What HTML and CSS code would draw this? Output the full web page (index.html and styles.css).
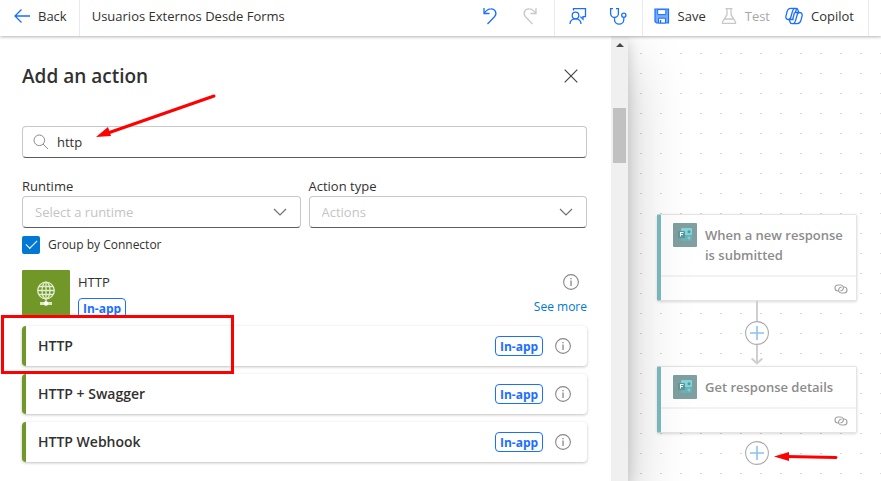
FILE: index.html
```html
<!DOCTYPE html>
<html lang="en">
<head>
<meta charset="utf-8">
<title>Usuarios Externos Desde Forms</title>
<link rel="stylesheet" href="styles.css">
</head>
<body>
<svg class="symbols" aria-hidden="true">
  <symbol id="info" viewBox="0 0 16 16">
    <circle cx="8" cy="8" r="7.4" fill="none" stroke="#8a8886" stroke-width="1.1"/>
    <path d="M7.4 4h1.300v1.300H7.400zM7.400 6.500h1.300V12H7.400z" fill="#8a8886"/>
  </symbol>
  <symbol id="chevron" viewBox="0 0 14 8">
    <path d="M1 1l6 6 6-6" fill="none" stroke="#707070" stroke-width="1.2"/>
  </symbol>
  <symbol id="plus" viewBox="0 0 24 24">
    <circle cx="12" cy="12" r="11.4" fill="#fff" stroke="#acacac" stroke-width="1.1"/>
    <path d="M12 5v14M5 12h14" stroke="#8fc1ea" stroke-width="1.6"/>
  </symbol>
  <symbol id="link" viewBox="0 0 14 10">
    <g fill="none" stroke="#a0a0a0" stroke-width="1.100">
      <path d="M5 7H4A3 3 0 0 1 4 1h2.500a2.900 2.900 0 0 1 2.300 4.700c-.6.800-1.500 1.200-2.500 1"/>
      <path d="M9 3h1a3 3 0 0 1 0 6H7.500a2.900 2.900 0 0 1-2.300-4.700c.6-.8 1.500-1.200 2.500-1"/>
    </g>
  </symbol>
  <symbol id="forms" viewBox="0 0 24 24">
    <rect width="24" height="24" rx="1" fill="#7f9fa0"/>
    <rect x="8" y="5" width="11" height="7" rx="1" fill="#86d3d8"/>
    <rect x="8" y="12" width="11" height="6" rx="1" fill="#69b3b7"/>
    <circle cx="16" cy="8.700" r="1.500" fill="#4e9ca2"/>
    <circle cx="16" cy="15" r="1.500" fill="#8fc9cb"/>
    <rect x="5" y="8" width="7" height="7" rx="1" fill="#5a9699"/>
    <path d="M7.500 13.500v-4h3M7.500 11.500h2.500" fill="none" stroke="#fff" stroke-width="1.100"/>
  </symbol>
</svg>

<header class="bar">
  <button class="tool back">
    <svg width="16" height="14" viewBox="0 0 16 14"><path d="M16 7H1M7.500.5L1 7l6.500 6.500" fill="none" stroke="#1a6fff" stroke-width="1.300"/></svg>
    Back
  </button>
  <h1 class="flow-name">Usuarios Externos Desde Forms</h1>
  <div class="group history">
    <button class="tool" aria-label="Undo"><svg width="16" height="18" viewBox="0 0 16 18"><path d="M2 1v5.500h5.500M2.200 6.200C4 3.500 6 1.800 9 1.800a4.700 4.700 0 0 1 3.500 8L5.500 17" fill="none" stroke="#1a6fff" stroke-width="1.300"/></svg></button>
    <button class="tool" aria-label="Redo" disabled><svg width="16" height="18" viewBox="0 0 16 18"><path d="M14 1v5.500H8.500M13.800 6.200C12 3.500 10 1.800 7 1.800a4.700 4.700 0 0 0-3.500 8L10.500 17" fill="none" stroke="#c8c8c8" stroke-width="1.300"/></svg></button>
  </div>
  <div class="group checks">
    <button class="tool" aria-label="Feedback"><svg width="18" height="18" viewBox="0 0 18 18"><g fill="none" stroke="#1a6fff" stroke-width="1.300"><circle cx="6.500" cy="8.500" r="3.300"/><path d="M1 17c0-3 2.200-5.200 5.500-5.200S12 14 12 17M4.500 3.500V1.600h12v8h-2.500v2.600l-2.700-2.600"/></g></svg></button>
    <button class="tool" aria-label="Flow checker"><svg width="18" height="18" viewBox="0 0 18 18"><g fill="none" stroke="#1a6fff" stroke-width="1.300"><path d="M4 1.600H1.600v5a3.900 3.900 0 0 0 7.800 0v-5H7M5.500 10.500v2a4.600 4.600 0 0 0 9.300 0v-2.300"/><circle cx="14.800" cy="8.200" r="2.100"/></g></svg></button>
  </div>
  <div class="group commands">
    <button class="tool"><svg width="16" height="16" viewBox="0 0 16 16"><path d="M1 1h13.500v14H2.500L1 13.500z" fill="#76adff" stroke="#1a6fff" stroke-width="1.200"/><path d="M3.700 1.600h8.100v5H3.700zM4.500 10.200h7V15h-7z" fill="#fff" stroke="#1a6fff"/><path d="M6.500 12v3" stroke="#1a6fff" stroke-width="1.400"/></svg>Save</button>
    <button class="tool" disabled><svg width="16" height="16" viewBox="0 0 16 16"><path d="M4.500.7h7M6 .7v6L1.500 14v1.300h13V14L10 6.700v-6M3.500 11h9" fill="none" stroke="#c8c8c8" stroke-width="1.300"/></svg>Test</button>
    <button class="tool"><svg width="18" height="18" viewBox="0 0 18 18"><g fill="none" stroke="#1a6fff" stroke-width="1.300" stroke-linejoin="round"><path d="M8.500 12.500H3.200C.9 12.500.6 10.500 1 8.800l1-4C2.600 2.500 3.800 1.400 5.800 1.400h5.400c1.200 0 1.600.9 1.900 1.900l.4 1.700"/><path d="M9.500 5.500h5.300c2.300 0 2.600 2 2.200 3.700l-1 4c-.6 2.300-1.800 3.400-3.800 3.400H6.800c-1.200 0-1.600-.9-1.900-1.900l-.6-2"/><path d="M9.500 1.500C8.200 2 7.700 3.300 7.300 4.800L5.900 10c-.3 1.400-.8 2.200-1.900 2.500M8.500 16.500c1.300-.5 1.800-1.800 2.200-3.300L12.100 8c.3-1.400.8-2.200 1.900-2.500M9.500 5.500L7.700 12.500M11.500 1.500l-1 4"/></g></svg>Copilot</button>
  </div>
</header>

<main class="work">
  <section class="panel">
    <div class="content">
      <div class="heading">
        <h2>Add an action</h2>
        <button class="icon-btn" aria-label="Close"><svg width="14" height="14" viewBox="0 0 14 14"><path d="M.7.7l12.600 12.600M13.300.7L.7 13.300" stroke="#484644" stroke-width="1.200"/></svg></button>
      </div>
      <label class="search">
        <svg width="16" height="16" viewBox="0 0 16 16"><g fill="none" stroke="#8a8a8a"><circle cx="6.300" cy="6.300" r="5.300"/><path d="M10 10l5 5"/></g></svg>
        <input type="text" value="http" aria-label="Search for an action or connector">
      </label>
      <div class="filters">
        <div class="field">
          <label for="runtime">Runtime</label>
          <div class="pick">
            <select id="runtime"><option>Select a runtime</option></select>
            <svg width="14" height="8"><use href="#chevron"/></svg>
          </div>
        </div>
        <div class="field">
          <label for="type">Action type</label>
          <div class="pick">
            <select id="type"><option>Actions</option></select>
            <svg width="14" height="8"><use href="#chevron"/></svg>
          </div>
        </div>
      </div>
      <label class="check"><input type="checkbox" checked>Group by Connector</label>

      <div class="connector">
        <svg width="48" height="48" viewBox="0 0 48 48"><rect width="48" height="48" rx="1" fill="#709727"/><g fill="none" stroke="#e3edcf" stroke-width="1.300"><circle cx="24" cy="20.500" r="8.300"/><ellipse cx="24" cy="20.500" rx="4" ry="8.300"/><path d="M24 12v21M15.700 20.500h16.600M17 16.500h14M17 24.500h14"/></g><path d="M18 33.500h12" stroke="#dce8c4" stroke-width="3"/><circle cx="24" cy="33.500" r="2.300" fill="#fff"/></svg>
        <div class="about"><h3>HTTP</h3><span class="badge">In-app</span></div>
        <div class="more">
          <button class="icon-btn" aria-label="About HTTP"><svg width="16" height="16"><use href="#info"/></svg></button>
          <a href="#more">See more</a>
        </div>
      </div>
      <ul class="actions">
        <li class="marked"><span>HTTP</span><span class="badge">In-app</span><button class="icon-btn" aria-label="About HTTP action"><svg width="16" height="16"><use href="#info"/></svg></button></li>
        <li><span>HTTP + Swagger</span><span class="badge">In-app</span><button class="icon-btn" aria-label="About HTTP + Swagger"><svg width="16" height="16"><use href="#info"/></svg></button></li>
        <li><span>HTTP Webhook</span><span class="badge">In-app</span><button class="icon-btn" aria-label="About HTTP Webhook"><svg width="16" height="16"><use href="#info"/></svg></button></li>
      </ul>
      <svg class="pointer to-search" width="120" height="46" viewBox="0 0 120 46"><path d="M118 3L12 40" stroke="#f00" stroke-width="3" stroke-linecap="round"/><path d="M0 44l12-10 3 9z" fill="#f00"/></svg>
    </div>
    <div class="scroll" aria-hidden="true"><span class="up"></span><span class="thumb"></span></div>
  </section>

  <section class="canvas">
    <article class="node">
      <div class="top"><svg width="24" height="24"><use href="#forms"/></svg><h3>When a new response is submitted</h3></div>
      <div class="foot"><svg width="14" height="10"><use href="#link"/></svg></div>
    </article>
    <div class="edge">
      <span class="line"></span>
      <button class="icon-btn" aria-label="Insert step"><svg width="24" height="24"><use href="#plus"/></svg></button>
      <svg width="12" height="21" viewBox="0 0 12 21"><path d="M6 0v18M.7 13.500L6 18.500l5.300-5" fill="none" stroke="#cfcfcf" stroke-width="2"/></svg>
    </div>
    <article class="node">
      <div class="top"><svg width="24" height="24"><use href="#forms"/></svg><h3>Get response details</h3></div>
      <div class="foot"><svg width="14" height="10"><use href="#link"/></svg></div>
    </article>
    <div class="edge last">
      <button class="icon-btn" aria-label="Add step"><svg width="24" height="24"><use href="#plus"/></svg></button>
      <svg class="pointer to-add" width="64" height="12" viewBox="0 0 64 12"><path d="M12 5.500L62 6.500" stroke="#f00" stroke-width="3" stroke-linecap="round"/><path d="M0 5.500L15 1v9z" fill="#f00"/></svg>
    </div>
  </section>
</main>
</body>
</html>
```
FILE: styles.css
```css
*, *::before, *::after { box-sizing: border-box; }

body {
  margin: 0;
  height: 100vh;
  display: flex;
  flex-direction: column;
  overflow: hidden;
  background: #fff;
  color: #323130;
  font: 13px/20px "Open Sans", "Noto Sans", sans-serif;
}

h1, h2, h3, ul { margin: 0; padding: 0; font: inherit; }
svg { display: block; flex: none; }
.symbols { position: absolute; width: 0; height: 0; }

button {
  padding: 0;
  border: 0;
  background: none;
  color: inherit;
  font: inherit;
}

/* Command bar */
.bar {
  position: relative;
  z-index: 3;
  display: flex;
  flex: none;
  height: 36px;
  padding-right: 12px;
  background: #fff;
  box-shadow: 0 1px 3px rgba(0, 0, 0, .3);
}
.tool {
  display: flex;
  align-items: center;
  gap: 8px;
  height: 32px;
  white-space: nowrap;
}
.tool:disabled { color: #a8a8a8; }
.back { height: 36px; padding: 0 12px 4px 14px; border-right: 1px solid #eaeaea; }
.flow-name { flex: 1; padding-left: 12px; line-height: 32px; white-space: nowrap; }
.group { display: flex; border-right: 1px solid #eaeaea; }
.history { gap: 24px; padding-right: 16px; }
.checks { gap: 22px; padding: 0 15px 0 14px; }
.commands { gap: 15px; padding: 0 14px 0 11px; }

/* Action picker */
.work { display: flex; flex: 1; min-height: 0; }
.panel {
  position: relative;
  z-index: 2;
  display: flex;
  flex: none;
  width: min(628px, 72vw);
  background: #fff;
  box-shadow: 0 26px 58px rgba(0, 0, 0, .22), 0 5px 14px rgba(0, 0, 0, .18);
}
.content { position: relative; flex: 1; padding: 26px 24px 0 22px; }
.heading {
  display: flex;
  align-items: center;
  justify-content: space-between;
  height: 28px;
  padding-right: 9px;
}
.heading h2 { font-size: 19px; font-weight: 600; line-height: 28px; }

.search {
  display: flex;
  align-items: center;
  gap: 8px;
  height: 32px;
  margin-top: 36px;
  padding: 0 10px;
  border: 1px solid #c8c8c8;
  border-bottom-color: #5c5c5c;
  border-radius: 4px;
}
.search input {
  flex: 1;
  min-width: 0;
  padding: 0;
  border: 0;
  outline: 0;
  background: none;
  color: inherit;
  font: inherit;
}

.filters {
  display: grid;
  grid-template-columns: 1fr 1fr;
  gap: 8px;
  margin-top: 18px;
}
.field label { display: block; }
.pick { display: flex; align-items: center; }
.pick select {
  flex: 1;
  height: 32px;
  padding: 0 12px;
  appearance: none;
  border: 1px solid #c8c8c8;
  border-bottom-color: #5c5c5c;
  border-radius: 4px;
  background: #fff;
  color: #c4c4c4;
  font: inherit;
}
.pick svg { margin: 0 14px 0 -28px; pointer-events: none; }

.check { display: flex; align-items: center; gap: 8px; margin-top: 8px; height: 18px; font-size: 12px; }
.check input {
  width: 18px;
  height: 18px;
  margin: 0;
  appearance: none;
  display: grid;
  place-items: center;
  border-radius: 2px;
  background: #0078d4;
}
.check input::before {
  content: "";
  width: 11px;
  height: 6px;
  margin-bottom: 4px;
  border: solid #fff;
  border-width: 0 0 1px 1px;
  rotate: -45deg;
}

.connector { display: flex; gap: 8px; margin-top: 16px; }
.about { flex: 1; }
.about h3 { margin: 2px 0 6px; font-weight: 500; }
.badge {
  display: block;
  width: 48px;
  height: 20px;
  border: 1px solid #1a6fff;
  border-radius: 4px;
  color: #1a6fff;
  font-size: 12px;
  font-weight: 700;
  line-height: 19px;
  text-align: center;
}
.more { display: flex; flex-direction: column; align-items: flex-end; gap: 7px; padding-top: 4px; }
.more .icon-btn { margin-right: 8px; }
.more a { color: #0078d4; font-size: 12px; text-decoration: none; }

.actions { display: grid; gap: 8px; margin-top: 8px; list-style: none; }
.actions li {
  position: relative;
  display: flex;
  align-items: center;
  gap: 12px;
  height: 40px;
  padding: 0 16px 0 12px;
  border-left: 4px solid #709727;
  border-radius: 4px;
  box-shadow: 0 1px 3px rgba(0, 0, 0, .25);
}
.actions li > :first-child { flex: 1; font-size: 14px; font-weight: 600; }
.marked::after {
  content: "";
  position: absolute;
  inset: -11px auto -8px -25px;
  width: 233px;
  border: 3px solid #f00;
  z-index: 1;
}

.scroll { display: flex; flex-direction: column; align-items: center; width: 17px; background: #f0f0f0; }
.up {
  margin-top: 7px;
  border: solid transparent;
  border-width: 0 4px 4px;
  border-bottom-color: #484848;
}
.thumb { width: 13px; height: 55px; margin-top: 61px; background: #c1c1c1; }

/* Designer canvas with its dotted grid */
.canvas {
  flex: 1;
  min-width: 0;
  padding: 178px 24px 0 29px;
  background:
    linear-gradient(transparent 1px, #fff 1px) 0 17px / 20px 20px,
    linear-gradient(90deg, #d6d6d6 2px, #fff 2px) 12px 0 / 20px 20px;
}
.node {
  width: 200px;
  border: 1px solid #e4e4e4;
  border-left: 4px solid #7dbcc0;
  border-radius: 2px;
  background: #fff;
  box-shadow: 0 1px 3px rgba(0, 0, 0, .15);
}
.top { display: flex; gap: 8px; padding: 8px 8px 8px 12px; min-height: 40px; }
.top h3 { padding: 2px 0; color: #8c8c8c; font-weight: 600; }
.foot {
  display: flex;
  align-items: center;
  justify-content: flex-end;
  height: 25px;
  padding-right: 8px;
  border-top: 2px solid #f2f2f2;
}
.edge { position: relative; display: flex; flex-direction: column; align-items: center; width: 200px; }
.line { width: 2px; height: 20px; background: #cfcfcf; }
.last { padding-top: 8px; }

/* Callouts */
.pointer { position: absolute; z-index: 2; }
.to-search { left: 96px; top: 57px; }
.to-add { left: 117px; top: 18px; }
```
